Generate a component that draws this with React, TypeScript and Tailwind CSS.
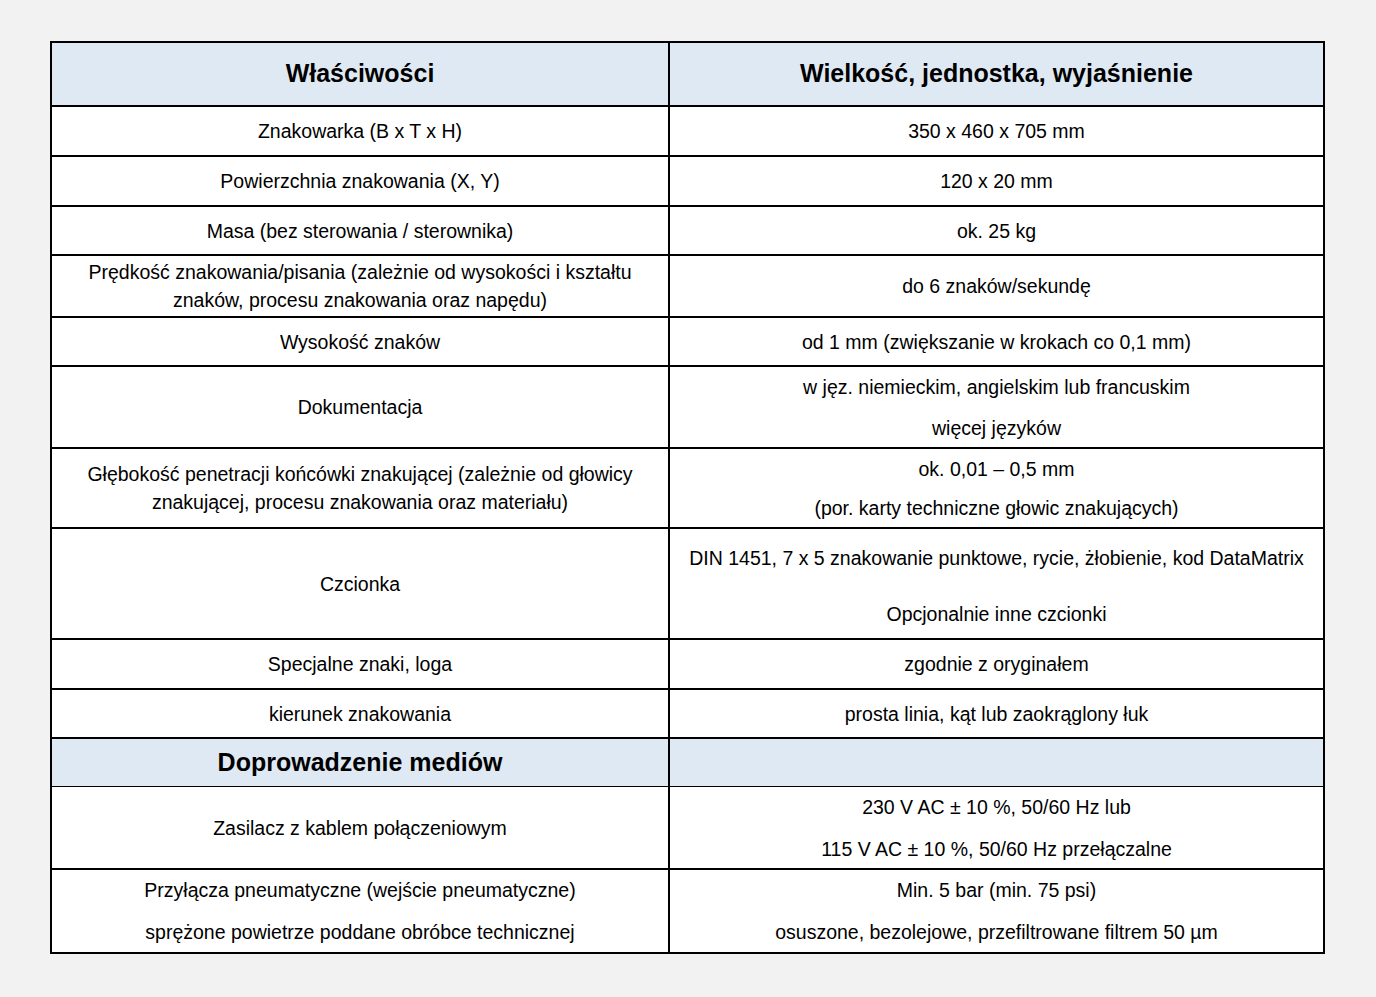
import type { ReactNode } from 'react'

type Row = {
  h: string
  left: ReactNode
  right: ReactNode
  leftGap?: string
  rightGap?: string
  top?: string
}

const rows: Row[] = [
  { h: 'h-[50px]', left: ['Znakowarka (B x T x H)'], right: ['350 x 460 x 705 mm'] },
  { h: 'h-[50px]', left: ['Powierzchnia znakowania (X, Y)'], right: ['120 x 20 mm'] },
  { h: 'h-[49px]', left: ['Masa (bez sterowania / sterownika)'], right: ['ok. 25 kg'] },
  {
    h: 'h-[62px]',
    left: ['Prędkość znakowania/pisania (zależnie od wysokości i kształtu', 'znaków, procesu znakowania oraz napędu)'],
    right: ['do 6 znaków/sekundę'],
  },
  { h: 'h-[49px]', left: ['Wysokość znaków'], right: ['od 1 mm (zwiększanie w krokach co 0,1 mm)'] },
  {
    h: 'h-[82px]',
    left: ['Dokumentacja'],
    right: ['w jęz. niemieckim, angielskim lub francuskim', 'więcej języków'],
    rightGap: 'gap-[13px]',
  },
  {
    h: 'h-[80px]',
    left: ['Głębokość penetracji końcówki znakującej (zależnie od głowicy', 'znakującej, procesu znakowania oraz materiału)'],
    right: ['ok. 0,01 – 0,5 mm', '(por. karty techniczne głowic znakujących)'],
    rightGap: 'gap-[11px]',
  },
  {
    h: 'h-[111px]',
    left: ['Czcionka'],
    right: ['DIN 1451, 7 x 5 znakowanie punktowe, rycie, żłobienie, kod DataMatrix', 'Opcjonalnie inne czcionki'],
    rightGap: 'gap-[28px] pt-[4px]',
  },
  { h: 'h-[50px]', left: ['Specjalne znaki, loga'], right: ['zgodnie z oryginałem'] },
  { h: 'h-[49px]', left: ['kierunek znakowania'], right: ['prosta linia, kąt lub zaokrąglony łuk'] },
]

const media: Row[] = [
  {
    h: 'h-[82px]',
    top: 'border-t',
    left: ['Zasilacz z kablem połączeniowym'],
    right: ['230 V AC ± 10 %, 50/60 Hz lub', '115 V AC ± 10 %, 50/60 Hz przełączalne'],
    rightGap: 'gap-[14px]',
  },
  {
    h: 'h-[84px]',
    left: ['Przyłącza pneumatyczne (wejście pneumatyczne)', 'sprężone powietrze poddane obróbce technicznej'],
    right: ['Min. 5 bar (min. 75 psi)', 'osuszone, bezolejowe, przefiltrowane filtrem 50 µm'],
    leftGap: 'gap-[14px]',
    rightGap: 'gap-[14px]',
  },
]

function Cell({ lines, gap, border }: { lines: ReactNode; gap?: string; border?: boolean }) {
  return (
    <div className={`flex flex-col items-center justify-center text-center ${gap || ''} ${border ? 'border-r-2 border-black' : ''}`}>
      {(lines as string[]).map((t, i) => (
        <div key={i} className="leading-[28px] whitespace-nowrap">{t}</div>
      ))}
    </div>
  )
}

function SpecRow({ row }: { row: Row }) {
  return (
    <div className={`grid grid-cols-[618px_1fr] ${row.h} ${row.top || 'border-t-2'} border-black`}>
      <Cell lines={row.left} gap={row.leftGap} border />
      <Cell lines={row.right} gap={row.rightGap} />
    </div>
  )
}

export default function App() {
  return (
    <div className="min-h-screen bg-[#f2f2f2] pt-[41px] pl-[50px] text-black" style={{ fontFamily: '"Liberation Sans", Arial, sans-serif' }}>
      <div className="w-[1275px] border-2 border-black bg-white text-[19.5px]">
        <div className="grid grid-cols-[618px_1fr] h-[62px] bg-[#dfe9f4] text-[25px] font-bold">
          <div className="flex items-center justify-center border-r-2 border-black">Właściwości</div>
          <div className="flex items-center justify-center">Wielkość, jednostka, wyjaśnienie</div>
        </div>

        {rows.map((r, i) => <SpecRow key={i} row={r} />)}

        <div className="grid grid-cols-[618px_1fr] h-[49px] border-t-2 border-black bg-[#dfe9f4] text-[25px] font-bold">
          <div className="flex items-center justify-center border-r-2 border-black">Doprowadzenie mediów</div>
          <div />
        </div>

        {media.map((r, i) => <SpecRow key={i} row={r} />)}
      </div>
    </div>
  )
}
